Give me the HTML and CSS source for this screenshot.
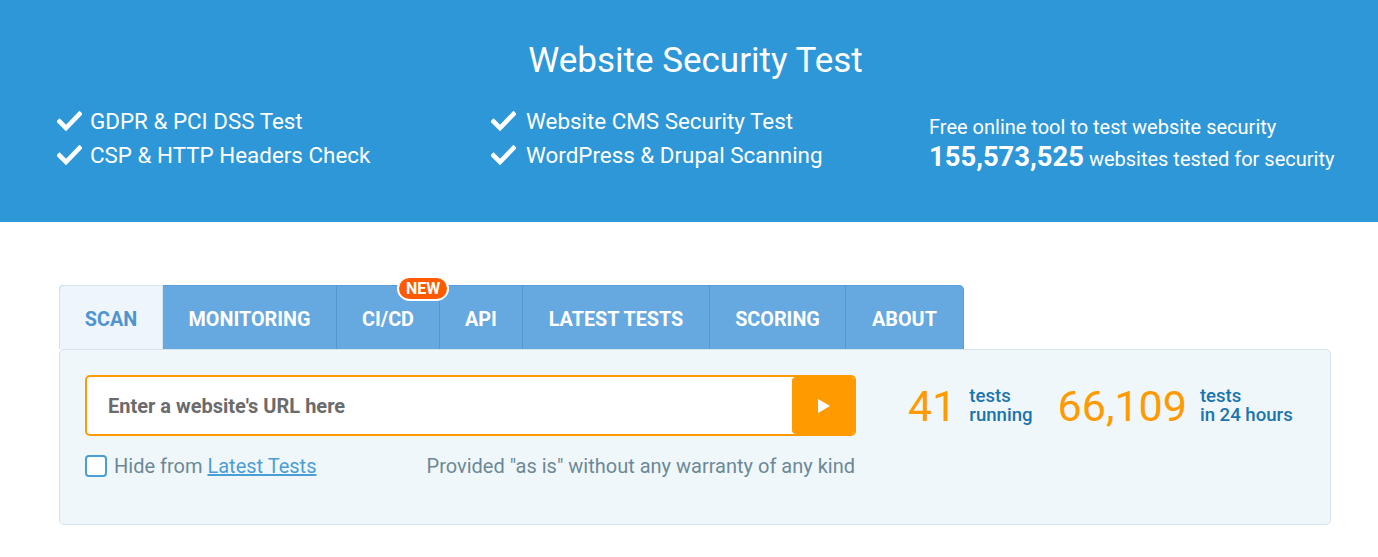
FILE: index.html
```html
<!DOCTYPE html>
<html>
<head>
<meta charset="utf-8">
<link rel="stylesheet" href="styles.css">
</head>
<body>
<header class="hero">
  <h1 class="hero-title">Website Security Test</h1>
  <div class="hero-row">
    <ul class="features col1">
      <li><svg class="check" viewBox="0 0 24 20"><path d="M2 10.5 L8.5 17 L22 3" fill="none" stroke="#fff" stroke-width="4.6" stroke-linejoin="miter" stroke-linecap="square"/></svg>GDPR &amp; PCI DSS Test</li>
      <li><svg class="check" viewBox="0 0 24 20"><path d="M2 10.5 L8.5 17 L22 3" fill="none" stroke="#fff" stroke-width="4.6" stroke-linejoin="miter" stroke-linecap="square"/></svg>CSP &amp; HTTP Headers Check</li>
    </ul>
    <ul class="features col2">
      <li><svg class="check" viewBox="0 0 24 20"><path d="M2 10.5 L8.5 17 L22 3" fill="none" stroke="#fff" stroke-width="4.6" stroke-linejoin="miter" stroke-linecap="square"/></svg>Website CMS Security Test</li>
      <li><svg class="check" viewBox="0 0 24 20"><path d="M2 10.5 L8.5 17 L22 3" fill="none" stroke="#fff" stroke-width="4.6" stroke-linejoin="miter" stroke-linecap="square"/></svg>WordPress &amp; Drupal Scanning</li>
    </ul>
    <div class="hero-stats">
      <div class="hero-line1">Free online tool to test website security</div>
      <div class="hero-line2"><strong>155,573,525</strong> websites tested for security</div>
    </div>
  </div>
</header>

<main class="main">
  <nav class="tabs">
    <a class="tab active">SCAN</a>
    <a class="tab">MONITORING</a>
    <a class="tab tab-new">CI/CD<span class="badge">NEW</span></a>
    <a class="tab">API</a>
    <a class="tab">LATEST TESTS</a>
    <a class="tab">SCORING</a>
    <a class="tab last">ABOUT</a>
  </nav>
  <section class="panel">
    <div class="form-col">
      <div class="url-box">
        <div class="url-input">Enter a website's URL here</div>
        <div class="url-go"><svg viewBox="0 0 14 16" width="14" height="16"><path d="M1 1 L13 8 L1 15 Z" fill="#fff"/></svg></div>
      </div>
      <div class="form-foot">
        <label class="hide-opt"><span class="checkbox"></span>Hide from <a class="link">Latest Tests</a></label>
        <span class="disclaimer">Provided "as is" without any warranty of any kind</span>
      </div>
    </div>
    <div class="counters">
      <div class="counter"><span class="num">41</span><span class="lbl"><span class="lbl-line">tests</span><span class="lbl-line">running</span></span></div>
      <div class="counter"><span class="num">66,109</span><span class="lbl"><span class="lbl-line">tests</span><span class="lbl-line">in 24 hours</span></span></div>
    </div>
  </section>
</main>
</body>
</html>
```

FILE: styles.css
```css
* { box-sizing: border-box; }
body {
  margin: 0;
  font-family: Roboto, "Liberation Sans", Arial, sans-serif;
  background: #fff;
  color: #333;
}
.hero {
  background: #2e97d8;
  color: #fff;
  height: 222px;
  padding-top: 40px;
}
.hero-title {
  margin: 0;
  padding-left: 13px;
  text-align: center;
  font-size: 35px;
  line-height: 42px;
  font-weight: 400;
}
.hero-row {
  display: flex;
  margin-top: 22px;
  padding-left: 57px;
}
.features {
  list-style: none;
  margin: 0;
  padding: 0;
}
.col1 { width: 434px; }
.col2 { width: 438px; }
.features li {
  display: flex;
  align-items: center;
  font-size: 22.4px;
  line-height: 34px;
  height: 34px;
}
.check {
  width: 25px;
  height: 20px;
  margin-right: 9px;
  flex: none;
}
.col1 li .check { margin-right: 8px; }
.col2 li .check { margin-right: 10px; }
.hero-stats {
  padding-top: 11px;
}
.hero-line1 {
  font-size: 20px;
  line-height: 24px;
}
.hero-line2 {
  font-size: 20px;
  line-height: 40px;
  margin-top: -2px;
}
.hero-line2 strong {
  font-size: 27.4px;
  font-weight: 700;
}
.main {
  padding: 63px 0 0 59px;
  width: 1331px;
}
.tabs {
  display: flex;
  width: 905px;
  height: 64px;
  background: #66a8e0;
  border-radius: 5px 5px 0 0;
  border: 1px solid #5a9dd6;
  border-bottom: none;
}
.tab {
  position: relative;
  display: flex;
  align-items: center;
  justify-content: center;
  height: 100%;
  padding-top: 3px;
  color: #fff;
  font-weight: 700;
  font-size: 19.8px;
  border-right: 1px solid #5596d0;
  text-decoration: none;
}
.tab:nth-child(1) { width: 104px; }
.tab:nth-child(2) { width: 174px; }
.tab:nth-child(3) { width: 103px; }
.tab:nth-child(4) { width: 83px; }
.tab:nth-child(5) { width: 187px; }
.tab:nth-child(6) { width: 136px; }
.tab.last { flex: 1; border-right: none; }
.tab.active {
  background: #eff6fb;
  color: #4e95cf;
  border-right: none;
  margin-left: -1px;
  margin-top: -1px;
  height: calc(100% + 1px);
  border: 1px solid #d6e4ee;
  border-bottom: none;
  border-radius: 5px 0 0 0;
}
.badge {
  position: absolute;
  top: -10px;
  left: 60px;
  background: #ff5a00;
  color: #fff;
  border: 2px solid #fff;
  border-radius: 13px;
  font-size: 16px;
  font-weight: 700;
  line-height: 21px;
  padding: 0 7px;
}
.panel {
  display: flex;
  background: #f0f7fb;
  border: 1px solid #d5e3ec;
  border-radius: 5px;
  height: 176px;
  padding: 25px 25px 0 25px;
}
.form-col { width: 771px; }
.url-box {
  display: flex;
  height: 61px;
  border: 2px solid #ff9a00;
  border-radius: 5px;
  background: #fff;
  overflow: hidden;
}
.url-input {
  flex: 1;
  display: flex;
  align-items: center;
  padding-left: 21px;
  font-size: 20px;
  font-weight: 700;
  color: #6b6b6b;
}
.url-go {
  width: 62px;
  background: #ff9a00;
  display: flex;
  align-items: center;
  justify-content: center;
  border-radius: 4px 0 0 4px;
}
.url-go svg { margin-left: 2px; }
.form-foot {
  display: flex;
  justify-content: space-between;
  align-items: center;
  margin-top: 18px;
  font-size: 20px;
  color: #6c8896;
}
.hide-opt {
  display: flex;
  align-items: center;
}
.checkbox {
  width: 22px;
  height: 22px;
  border: 2px solid #4a9ed6;
  border-radius: 4px;
  background: #fff;
  margin-right: 7px;
}
.link {
  color: #4a9ed6;
  text-decoration: underline;
  margin-left: 5px;
}
.disclaimer { padding-right: 1px; }
.counters {
  display: flex;
  margin-left: 52px;
  height: 61px;
  align-items: center;
  gap: 25px;
}
.counter {
  display: flex;
  align-items: center;
}
.num {
  font-size: 43px;
  color: #ff9a00;
  font-weight: 400;
  line-height: 50px;
  margin-right: 13px;
}
.lbl {
  display: flex;
  flex-direction: column;
  color: #1a75ad;
  font-size: 18.6px;
  font-weight: 500;
}
.lbl-line {
  display: block;
  line-height: 19px;
  height: 19px;
}
```
